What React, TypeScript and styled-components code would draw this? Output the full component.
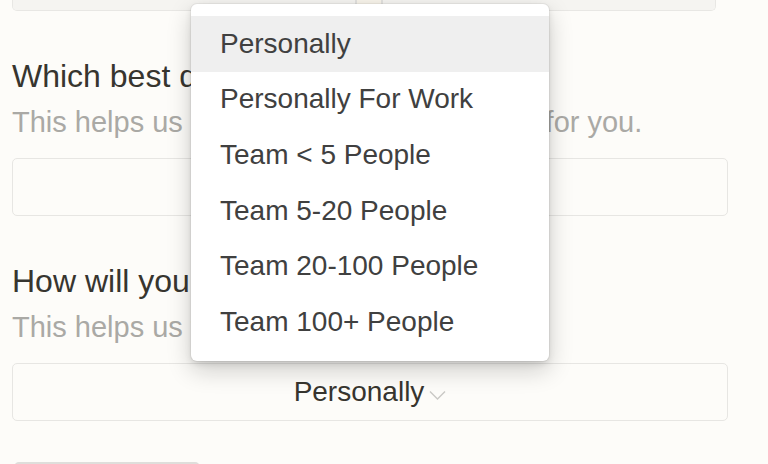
import React from "react";
import styled, { createGlobalStyle } from "styled-components";

const Global = createGlobalStyle`
  html, body { margin: 0; padding: 0; background: #fdfcf9; }
  body { font-family: "Liberation Sans", Arial, sans-serif; color: #37352f; }
  * { box-sizing: border-box; }
`;

const Page = styled.div`
  position: relative;
  width: 768px;
  height: 464px;
  overflow: hidden;
  padding: 0 40px 0 12px;
  display: flex;
  flex-direction: column;
  & > * { flex-shrink: 0; }
`;

const TopBox = styled.div`
  width: 704px;
  height: 11px;
  display: flex;
  border: 1.5px solid #e8e7e4;
  border-top: none;
  border-radius: 0 0 5px 5px;
  background: #f7f6f3;
  overflow: hidden;
`;

const TopCell = styled.div<{ $w?: number; $warm?: boolean }>`
  flex: ${(p) => (p.$w ? `0 0 ${p.$w}px` : "1 1 auto")};
  background: ${(p) => (p.$warm ? "#f8f4eb" : "#f5f4f1")};
  border-left: ${(p) => (p.$warm ? "2px solid #e2e1de" : "none")};
  border-right: ${(p) => (p.$warm ? "2px solid #e2e1de" : "none")};
`;

const Heading = styled.div<{ $mt: number }>`
  margin-top: ${(p) => p.$mt}px;
  font-size: 32px;
  line-height: 38px;
  color: #37352f;
  white-space: nowrap;
`;

const Sub = styled.div`
  margin-top: 10px;
  font-size: 29px;
  line-height: 34px;
  color: #aaa9a5;
  white-space: nowrap;
`;

const Field = styled.div<{ $mt: number }>`
  margin-top: ${(p) => p.$mt}px;
  width: 716px;
  height: 58px;
  border: 1.5px solid #e7e6e3;
  border-radius: 5px;
  background: #fdfcf9;
  display: flex;
  align-items: center;
  justify-content: center;
  gap: 5px;
`;

const SelectText = styled.span`
  font-size: 28px;
  color: #37352f;
`;

const Chevron = styled.svg`
  width: 17px;
  height: 11px;
  margin-top: 6px;
`;

const Button = styled.div`
  margin-top: 41px;
  margin-left: 2px;
  width: 186px;
  height: 20px;
  border: 2px solid #dfdedb;
  border-radius: 5px 5px 0 0;
  background: #fdfcf9;
`;

const Menu = styled.div`
  position: absolute;
  left: 191px;
  top: 4px;
  width: 358px;
  height: 357px;
  background: #ffffff;
  border-radius: 6px;
  padding: 12px 0;
  box-shadow: rgba(15, 15, 15, 0.05) 0 0 0 1px, rgba(15, 15, 15, 0.1) 0 3px 6px,
    rgba(15, 15, 15, 0.2) 0 9px 24px;
  display: flex;
  flex-direction: column;
`;

const Item = styled.div<{ $active?: boolean }>`
  height: 55.6px;
  flex-shrink: 0;
  display: flex;
  align-items: center;
  padding-left: 29px;
  font-size: 28px;
  color: #404040;
  background: ${(p) => (p.$active ? "#efefef" : "transparent")};
  white-space: nowrap;
`;

const options = [
  "Personally",
  "Personally For Work",
  "Team < 5 People",
  "Team 5-20 People",
  "Team 20-100 People",
  "Team 100+ People",
];

export default function App() {
  return (
    <>
      <Global />
      <Page>
        <TopBox>
          <TopCell $w={342} />
          <TopCell $w={28} $warm />
          <TopCell />
        </TopBox>
        <Heading $mt={46}>Which best describes your team?</Heading>
        <Sub>This helps us personalize the experience for you.</Sub>
        <Field $mt={19} />
        <Heading $mt={46}>How will you use Notion?</Heading>
        <Sub>This helps us tailor Notion to you.</Sub>
        <Field $mt={19}>
          <SelectText>Personally</SelectText>
          <Chevron viewBox="0 0 17 11" fill="none">
            <polyline points="1,1.5 8.5,9 16,1.5" stroke="#cac9c5" strokeWidth="1.4" />
          </Chevron>
        </Field>
        <Button />
        <Menu>
          {options.map((o, i) => (
            <Item key={o} $active={i === 0}>
              {o}
            </Item>
          ))}
        </Menu>
      </Page>
    </>
  );
}
